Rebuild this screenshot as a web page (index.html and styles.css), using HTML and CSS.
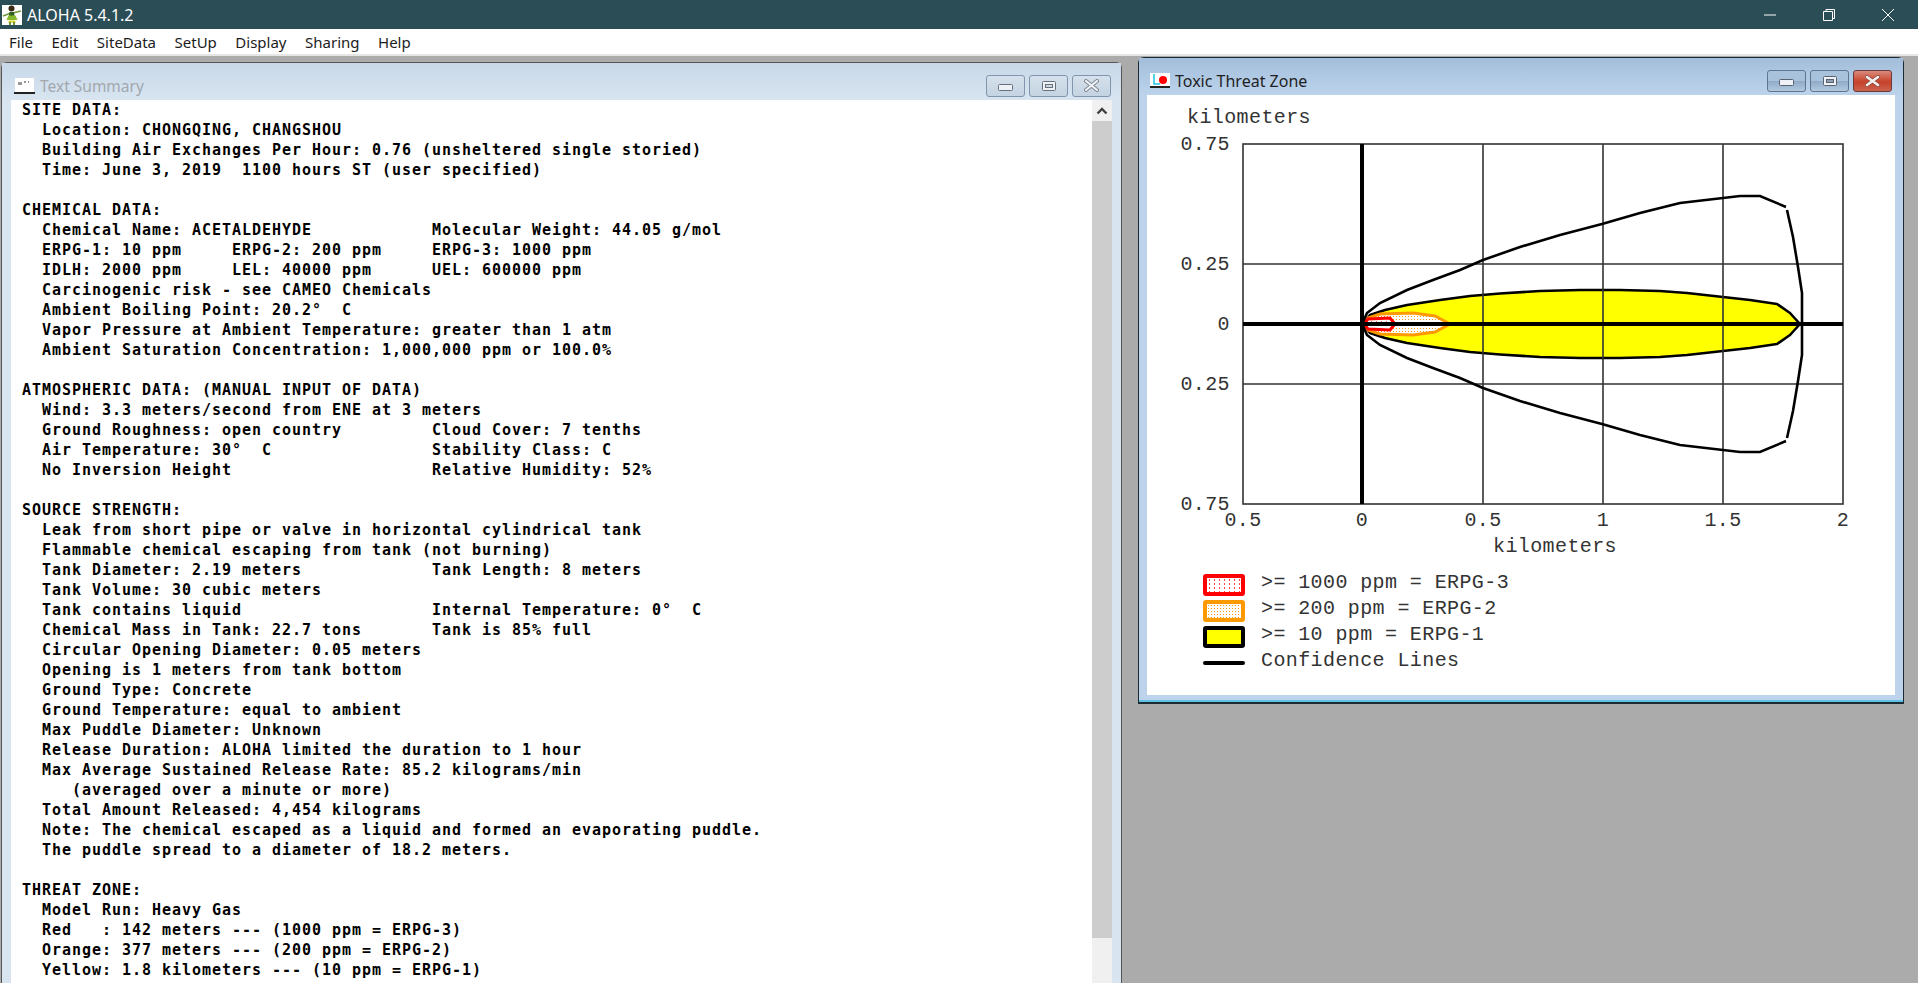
FILE: index.html
```html
<!DOCTYPE html>
<html lang="en">
<head>
  <meta charset="UTF-8" />
  <meta name="viewport" content="width=device-width, initial-scale=1.0" />
  <title>ALOHA 5.4.1.2</title>
  <link rel="stylesheet" href="styles.css">
</head>
<body>
  <header class="app-title">
    <svg class="app-icon" width="20" height="20" viewBox="0 0 20 20">
      <rect width="20" height="20" fill="#fff"/>
      <circle cx="9.5" cy="3.5" r="3" fill="#3a2a14"/>
      <path d="M9 8L1 11M11 8l8-2" stroke="#6f9a3a" stroke-width="1.6"/>
      <path d="M7.5 7h4.5l.5 4h-5.5z" fill="#2f5f24"/>
      <path d="M6.5 10.5h7l2 4.5h-11z" fill="#86b92c"/>
      <path d="M7 15.5h6l1 2h-8z" fill="#d4d42a"/>
      <path d="M8 17v3M12 17v3" stroke="#5f8a2a" stroke-width="1.8"/>
    </svg>
    <span class="app-name">ALOHA 5.4.1.2</span>
    <div class="app-controls">
      <svg width="14" height="14" viewBox="0 0 14 14"><path d="M1 7h12" stroke="#fff"/></svg>
      <svg width="14" height="14" viewBox="0 0 14 14"><path d="M1.5 3.5h9v9h-9zM4 3.5V1.5h8.5v9h-2" fill="none" stroke="#fff"/></svg>
      <svg width="14" height="14" viewBox="0 0 14 14"><path d="M1 1l12 12M13 1L1 13" stroke="#fff"/></svg>
    </div>
  </header>

  <nav class="menu">
    <span>File</span>
    <span>Edit</span>
    <span>SiteData</span>
    <span>SetUp</span>
    <span>Display</span>
    <span>Sharing</span>
    <span>Help</span>
  </nav>

  <main class="desktop">
    <section class="window summary">
      <div class="win-title">
        <svg class="win-icon" width="21" height="16" viewBox="0 0 21 16">
          <rect x="1" y="0" width="19" height="14" fill="#fff"/>
          <path d="M5 4v3M7 4v3M10 4h2M14 4h1" stroke="#333"/>
          <path d="M0 15h21" stroke="#222" stroke-width="2"/>
        </svg>
        <span class="win-name">Text Summary</span>
        <div class="win-btns">
          <button class="win-btn"><svg class="glyph-min" width="15" height="7" viewBox="0 0 15 7"><rect x=".5" y=".5" width="14" height="6" rx="1" fill="#eef2f6" stroke="#66707c"/></svg></button>
          <button class="win-btn"><svg width="14" height="10" viewBox="0 0 14 10"><rect x=".5" y=".5" width="13" height="9" rx="1" fill="#eef2f6" stroke="#66707c"/><rect x="3.5" y="3.5" width="7" height="3" fill="#cfd8e2" stroke="#66707c"/></svg></button>
          <button class="win-btn"><svg width="15" height="13" viewBox="0 0 15 13"><path d="M2 2l11 9M13 2L2 11" stroke="#7d858e" stroke-width="4" stroke-linecap="round"/><path d="M2 2l11 9M13 2L2 11" stroke="#eef2f6" stroke-width="2.2" stroke-linecap="round"/></svg></button>
        </div>
      </div>
      <div class="summary-body">
<pre class="report">SITE DATA:
  Location: CHONGQING, CHANGSHOU
  Building Air Exchanges Per Hour: 0.76 (unsheltered single storied)
  Time: June 3, 2019  1100 hours ST (user specified)

CHEMICAL DATA:
  Chemical Name: ACETALDEHYDE            Molecular Weight: 44.05 g/mol
  ERPG-1: 10 ppm     ERPG-2: 200 ppm     ERPG-3: 1000 ppm
  IDLH: 2000 ppm     LEL: 40000 ppm      UEL: 600000 ppm
  Carcinogenic risk - see CAMEO Chemicals
  Ambient Boiling Point: 20.2°  C
  Vapor Pressure at Ambient Temperature: greater than 1 atm
  Ambient Saturation Concentration: 1,000,000 ppm or 100.0%

ATMOSPHERIC DATA: (MANUAL INPUT OF DATA)
  Wind: 3.3 meters/second from ENE at 3 meters
  Ground Roughness: open country         Cloud Cover: 7 tenths
  Air Temperature: 30°  C                Stability Class: C
  No Inversion Height                    Relative Humidity: 52%

SOURCE STRENGTH:
  Leak from short pipe or valve in horizontal cylindrical tank
  Flammable chemical escaping from tank (not burning)
  Tank Diameter: 2.19 meters             Tank Length: 8 meters
  Tank Volume: 30 cubic meters
  Tank contains liquid                   Internal Temperature: 0°  C
  Chemical Mass in Tank: 22.7 tons       Tank is 85% full
  Circular Opening Diameter: 0.05 meters
  Opening is 1 meters from tank bottom
  Ground Type: Concrete
  Ground Temperature: equal to ambient
  Max Puddle Diameter: Unknown
  Release Duration: ALOHA limited the duration to 1 hour
  Max Average Sustained Release Rate: 85.2 kilograms/min
     (averaged over a minute or more)
  Total Amount Released: 4,454 kilograms
  Note: The chemical escaped as a liquid and formed an evaporating puddle.
  The puddle spread to a diameter of 18.2 meters.

THREAT ZONE:
  Model Run: Heavy Gas
  Red   : 142 meters --- (1000 ppm = ERPG-3)
  Orange: 377 meters --- (200 ppm = ERPG-2)
  Yellow: 1.8 kilometers --- (10 ppm = ERPG-1)</pre>
        <div class="scrollbar">
          <div class="scroll-up"><svg width="12" height="8" viewBox="0 0 12 8"><path d="M1.5 6.5L6 2l4.5 4.5" fill="none" stroke="#404040" stroke-width="2.4"/></svg></div>
          <div class="scroll-thumb"></div>
        </div>
      </div>
    </section>

    <section class="window threat">
      <div class="win-title">
        <svg class="win-icon" width="20" height="15" viewBox="0 0 20 15">
          <rect width="20" height="13" fill="#fff"/>
          <path d="M4 1v10h6" fill="none" stroke="#21c4e8" stroke-width="1.5"/>
          <circle cx="13" cy="7" r="4" fill="#f00"/>
          <path d="M0 14h20" stroke="#222" stroke-width="2"/>
        </svg>
        <span class="win-name">Toxic Threat Zone</span>
        <div class="win-btns">
          <button class="win-btn"><svg class="glyph-min" width="15" height="7" viewBox="0 0 15 7"><rect x=".5" y=".5" width="14" height="6" rx="1" fill="#eef2f6" stroke="#59636f"/></svg></button>
          <button class="win-btn"><svg width="14" height="10" viewBox="0 0 14 10"><rect x=".5" y=".5" width="13" height="9" rx="1" fill="#eef2f6" stroke="#59636f"/><rect x="3.5" y="3.5" width="7" height="3" fill="#8fa0b2" stroke="#59636f"/></svg></button>
          <button class="win-btn close"><svg width="15" height="12" viewBox="0 0 15 12"><path d="M2 2l11 8M13 2L2 10" stroke="#8a4a44" stroke-width="4" stroke-linecap="round"/><path d="M2 2l11 8M13 2L2 10" stroke="#f4f0ee" stroke-width="2.6" stroke-linecap="round"/></svg></button>
        </div>
      </div>
      <div class="threat-body">
        <svg class="plot" width="748" height="470" viewBox="1147 95 748 470">
          <defs>
            <pattern id="dots-red" width="5" height="4" patternUnits="userSpaceOnUse">
              <rect width="5" height="4" fill="#fff"/>
              <rect x="1" y="1" width="1" height="1" fill="#f66"/>
            </pattern>
            <pattern id="dots-orange" width="3" height="3" patternUnits="userSpaceOnUse">
              <rect width="3" height="3" fill="#fff"/>
              <rect x="1" y="1" width="1" height="1" fill="#f90"/>
            </pattern>
            <path id="conf-a" d="M1363 322L1367 313L1380 303L1407 290L1433 280L1460 270L1483 260L1520 247L1560 235L1602 224L1640 213L1680 203L1723 198L1740 196L1760 196L1786 207"/>
            <path id="conf-b" d="M1787 210L1793 237L1798 267L1802 293L1802 324"/>
          </defs>

          <path class="zone-yellow" d="M1363 324L1370 315L1385 310L1407 305L1440 300L1470 296L1500 293.5L1540 291L1580 290L1620 290L1660 291L1687 293L1723 297L1750 300L1777 304L1790 313L1800 324L1790 335L1777 344L1750 348L1723 351L1687 355L1660 357L1620 358L1580 358L1540 357L1500 354.5L1470 352L1440 348L1407 343L1385 338L1370 333Z"/>
          <path class="zone-orange" d="M1364 324L1368 318L1380 314L1413 313L1435 316L1450 324L1435 332L1413 335L1380 334L1368 330Z"/>
          <path class="zone-red" d="M1364 324L1368 319L1390 318L1395 324L1390 330L1368 329Z"/>

          <g class="grid">
            <rect x="1243" y="144" width="600" height="360"/>
            <path d="M1483 144V504M1603 144V504M1723 144V504M1243 264H1843M1243 384H1843"/>
          </g>
          <path class="axes" d="M1362 144V504M1243 324H1843"/>

          <g class="confidence">
            <use href="#conf-a"/>
            <use href="#conf-b"/>
            <use href="#conf-a" transform="matrix(1 0 0 -1 0 648)"/>
            <use href="#conf-b" transform="matrix(1 0 0 -1 0 648)"/>
          </g>

          <text class="tick" x="1187" y="123">kilometers</text>
          <g class="tick end">
            <text x="1230" y="150">0.75</text>
            <text x="1230" y="270">0.25</text>
            <text x="1230" y="330">0</text>
            <text x="1230" y="390">0.25</text>
            <text x="1230" y="510">0.75</text>
          </g>
          <g class="tick mid">
            <text x="1243" y="526">0.5</text>
            <text x="1362" y="526">0</text>
            <text x="1483" y="526">0.5</text>
            <text x="1603" y="526">1</text>
            <text x="1723" y="526">1.5</text>
            <text x="1843" y="526">2</text>
            <text x="1555" y="552">kilometers</text>
          </g>
        </svg>

        <ul class="legend">
          <li><span class="swatch red"></span>&gt;= 1000 ppm = ERPG-3</li>
          <li><span class="swatch orange"></span>&gt;= 200 ppm = ERPG-2</li>
          <li><span class="swatch yellow"></span>&gt;= 10 ppm = ERPG-1</li>
          <li><span class="swatch line"></span>Confidence Lines</li>
        </ul>
      </div>
    </section>
  </main>
</body>
</html>
```

FILE: styles.css
```css
html, body { margin: 0; height: 100%; overflow: hidden; }
body { display: flex; flex-direction: column; background: #ababab; font-family: "Noto Sans", sans-serif; }

.app-title { display: flex; align-items: center; height: 29px; padding-left: 2px; background: #2b4d56; color: #fff; flex: none; }
.app-icon { margin-right: 5px; }
.app-name { font-size: 16px; }
.app-controls { display: flex; gap: 45px; margin-left: auto; margin-right: 23px; }

.menu { display: flex; gap: 18.5px; height: 25px; padding-left: 9px; align-items: center; background: #fff; color: #1c1c1c; font-size: 15px; flex: none; border-bottom: 2px solid #e6e6e6; }

.desktop { display: flex; align-items: flex-start; flex: 1; min-height: 0; padding-left: 1px; gap: 16px; }

.window { box-sizing: border-box; display: flex; flex-direction: column; border: 1px solid #555; border-radius: 6px 6px 0 0; }
.win-title { box-sizing: border-box; display: flex; align-items: center; flex: none; height: 37px; padding-top: 8px; }
.win-btns { display: flex; gap: 4px; margin-left: auto; }
.win-btn { display: flex; align-items: center; justify-content: center; width: 39px; height: 22px; padding: 0; border: 1px solid #8196ac; border-radius: 3px; }
.glyph-min { margin-top: 4px; }

.summary { width: 1121px; height: 927px; margin-top: 6px; border-bottom: 0; background: #d8e5f1; }
.summary .win-title { padding-left: 12px; padding-right: 10px; background: linear-gradient(#c8d8e8, #d8e5f1); }
.summary .win-icon { margin-right: 5px; }
.summary .win-name { color: #a2a8ae; font-size: 15.5px; }
.summary .win-btn { background: linear-gradient(#d5e1ec, #c4d3e2); }
.summary-body { display: flex; flex: 1; min-height: 0; margin: 0 9px 0 9px; background: #fff; }

.report { flex: 1; margin: 0; padding-left: 11px; overflow: hidden; font-family: "DejaVu Sans Mono", monospace; font-size: 15px; font-weight: bold; letter-spacing: 0.97px; line-height: 20px; color: #000; }

.scrollbar { display: flex; flex-direction: column; width: 20px; flex: none; background: #f0f0f0; }
.scroll-up { display: flex; align-items: center; justify-content: center; height: 21px; }
.scroll-thumb { height: 817px; background: #cdcdcd; }

.threat { width: 766px; height: 647px; margin-top: 1px; background: #bcd3eb; border-color: #1c2a33; border-bottom-width: 2px; box-shadow: inset 0 -2px 0 #5fc4e4; }
.threat .win-title { padding-left: 11px; padding-right: 11px; background: linear-gradient(#a3bedb, #bcd3eb); }
.threat .win-icon { margin-right: 5px; }
.threat .win-name { color: #1f1f1f; font-size: 16px; }
.threat .win-btn { background: linear-gradient(#a9c2dc 50%, #8fa9c6 50%, #b2c9e0); border-color: #5f7690; }
.threat .win-btn.close { background: linear-gradient(#d98a7c, #c8412a 55%, #c9634e); border-color: #6d3a3c; }
.threat-body { margin: 0 8px; height: 600px; background: #fff; }

.plot { display: block; }
.zone-yellow { fill: #ff0; stroke: #000; stroke-width: 2.6; stroke-linejoin: round; }
.zone-orange { fill: url(#dots-orange); stroke: #f90; stroke-width: 3; }
.zone-red { fill: url(#dots-red); stroke: #f00; stroke-width: 3; }
.grid { fill: none; stroke: #333; stroke-width: 1.6; }
.axes { fill: none; stroke: #000; stroke-width: 4; }
.confidence { fill: none; stroke: #000; stroke-width: 2.6; }
.tick { font-family: "Liberation Mono", monospace; font-size: 20px; letter-spacing: 0.4px; fill: #333; }
.tick.end { text-anchor: end; }
.tick.mid { text-anchor: middle; }

.legend { list-style: none; margin: 9px 0 0 0; padding: 0 0 0 56px; font-family: "Liberation Mono", monospace; font-size: 20px; letter-spacing: 0.4px; line-height: 18px; color: #333; }
.legend li { display: flex; align-items: flex-start; gap: 16px; height: 26px; }
.swatch { box-sizing: border-box; width: 42px; height: 22px; flex: none; border: 4px solid #000; border-radius: 3px; }
.swatch.red { border-color: #f00; background: radial-gradient(circle, #f44 0.6px, transparent 0.9px) 0 0 / 5px 4px #fff; }
.swatch.orange { border-color: #f90; background: radial-gradient(circle, #f90 0.7px, transparent 0.9px) 0 0 / 3px 3px #fff; }
.swatch.yellow { background: #ff0; }
.swatch.line { height: 4px; margin-top: 9px; border-width: 2px; border-radius: 2px; }
```
